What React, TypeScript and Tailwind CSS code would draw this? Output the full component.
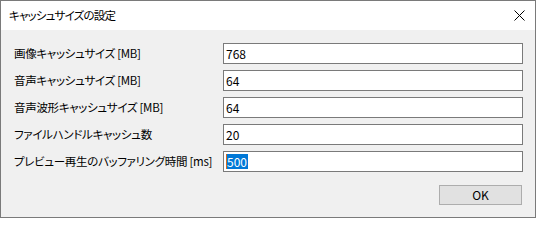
import React from 'react'

const FONT = "[font-family:'Noto_Sans_CJK_JP','Noto_Sans',sans-serif] [font-feature-settings:'palt']"

const ROWS = [
  { label: '画像キャッシュサイズ [MB]', value: '768' },
  { label: '音声キャッシュサイズ [MB]', value: '64' },
  { label: '音声波形キャッシュサイズ [MB]', value: '64' },
  { label: 'ファイルハンドルキャッシュ数', value: '20' },
  { label: 'プレビュー再生のバッファリング時間 [ms]', value: '500', selected: true },
]

export default function App() {
  return (
    <div className={`flex h-[218px] w-[536px] flex-col border border-[#7a7a7a] bg-white text-[12px] text-black ${FONT}`}>
      {/* title bar */}
      <div className="flex h-[29px] shrink-0 items-center justify-between bg-white pl-[8px] pr-[10px]">
        <span className="text-[11.5px] leading-none tracking-[-0.8px]">キャッシュサイズの設定</span>
        <svg width="11" height="11" viewBox="0 0 11 11" className="text-black">
          <path d="M0.5 0.5 L10.5 10.5 M10.5 0.5 L0.5 10.5" stroke="currentColor" strokeWidth="1" fill="none" />
        </svg>
      </div>

      {/* body */}
      <div className="flex flex-1 flex-col bg-[#f0f0f0] pl-[13px] pr-[12px] pt-[13px]">
        <div className="flex flex-col gap-[6px]">
          {ROWS.map(r => (
            <div key={r.label} className="flex h-[21px] items-center">
              <span className="w-[209px] shrink-0 whitespace-nowrap text-[11.5px] leading-none tracking-[-0.3px]">{r.label}</span>
              <div className="flex h-[21px] w-[300px] items-center border border-[#7a7a7a] bg-white pl-[2px]">
                {r.selected ? (
                  <>
                    <span className="h-[15px] w-px bg-[#d2691e]" />
                    <span className="bg-[#0078d7] pr-px leading-[15px] text-white">{r.value}</span>
                  </>
                ) : (
                  <span className="leading-none">{r.value}</span>
                )}
              </div>
            </div>
          ))}
        </div>

        <div className="mt-[13px] flex justify-end pr-[1px]">
          <button
            type="button"
            className="flex h-[20px] w-[83px] items-center justify-center border border-[#adadad] bg-[#e1e1e1] leading-none"
          >
            OK
          </button>
        </div>
      </div>
    </div>
  )
}
